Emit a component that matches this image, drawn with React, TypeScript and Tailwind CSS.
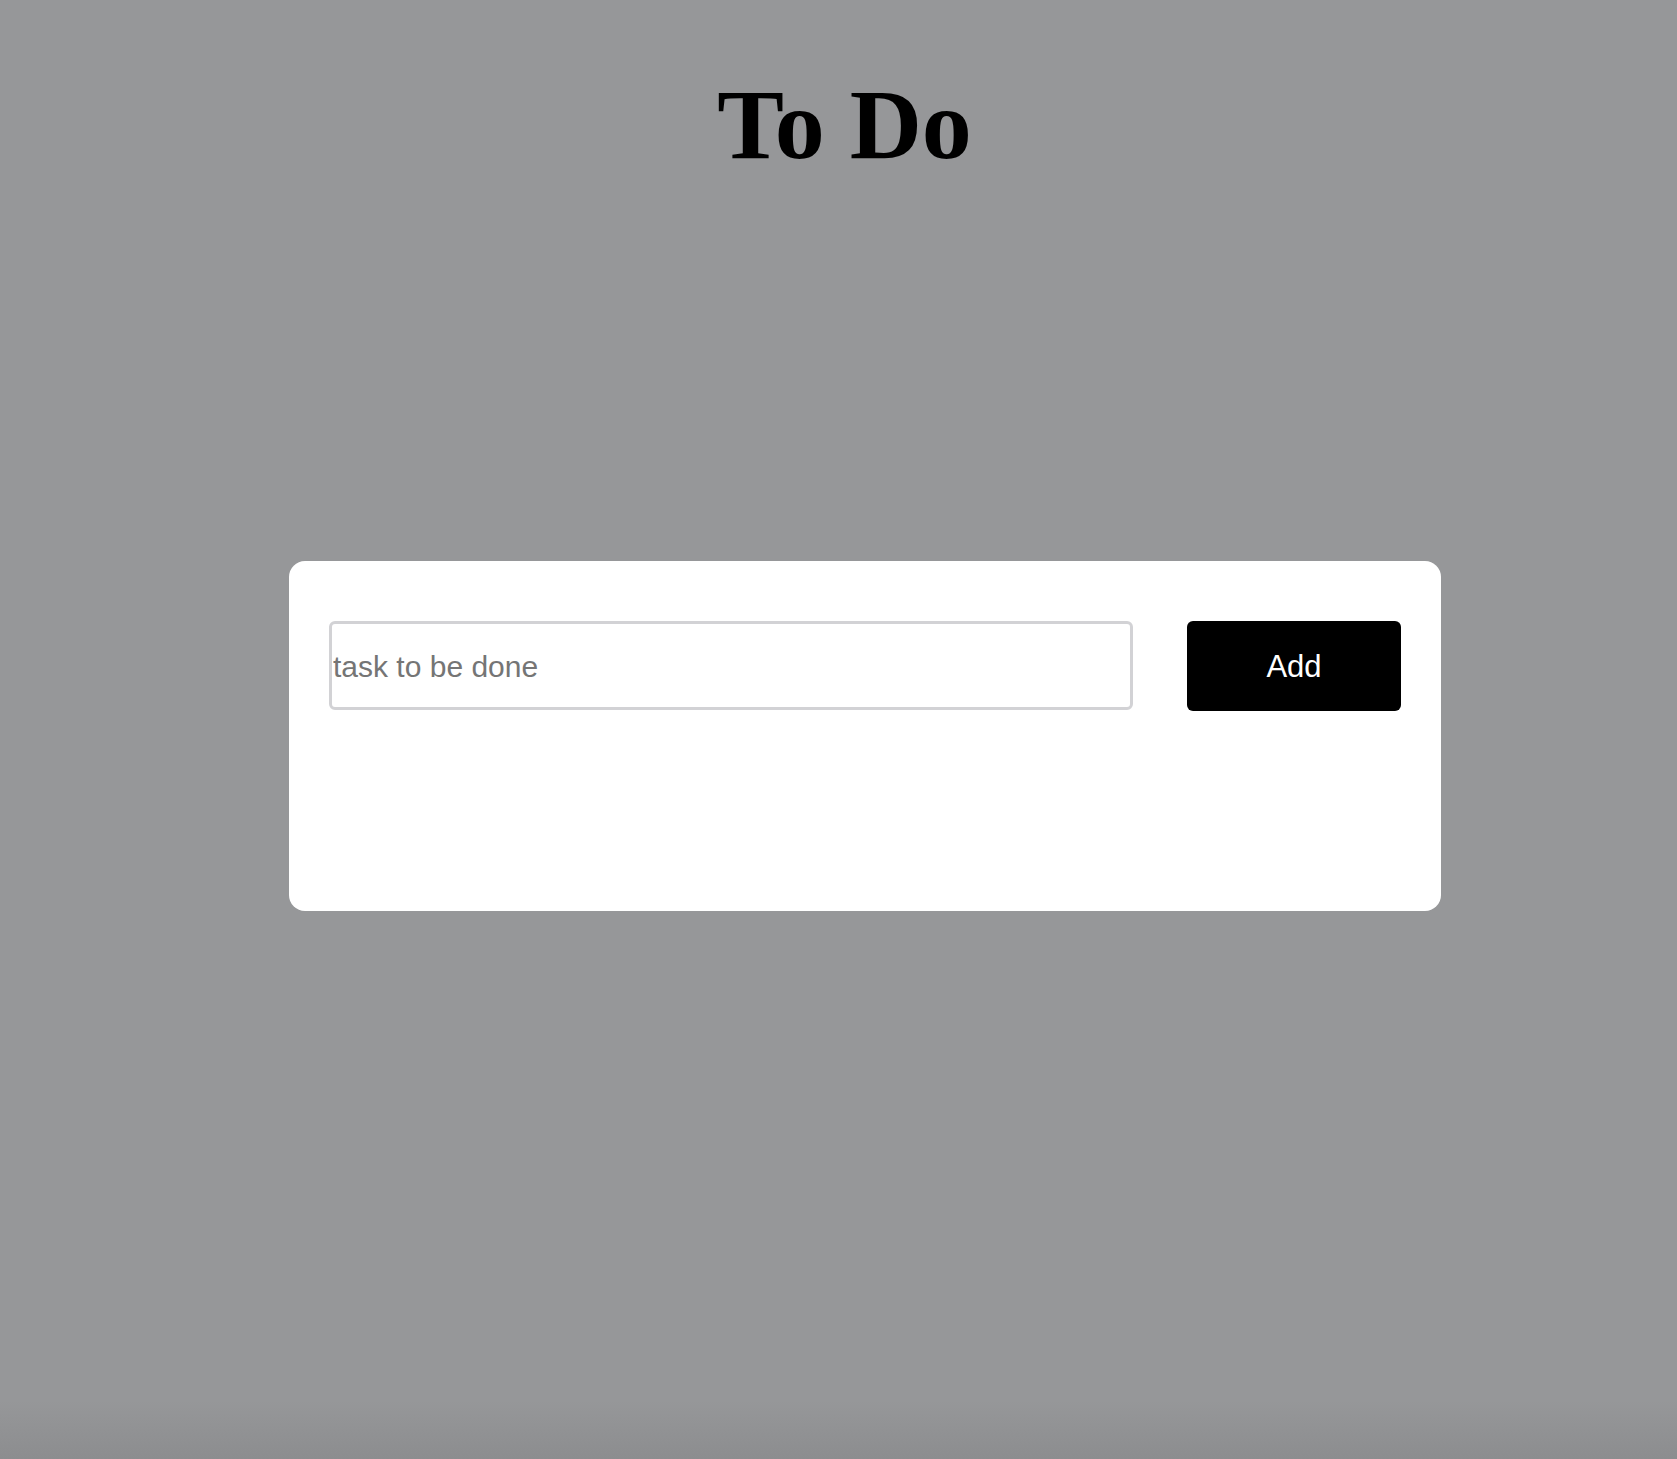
import React, { useState } from "react";

export default function App() {
  const [task, setTask] = useState("");
  const [tasks, setTasks] = useState<string[]>([]);

  const addTask = () => {
    if (!task.trim()) return;
    setTasks([...tasks, task.trim()]);
    setTask("");
  };

  return (
    <div className="min-h-screen bg-[linear-gradient(to_bottom,#969799_0%,#969799_96%,#8c8d8f_100%)] pt-[75px] font-['Liberation_Sans',Arial,sans-serif]">
      <h1 className="pl-[12px] text-center font-['Liberation_Serif','Times_New_Roman',serif] text-[100px] font-bold leading-none tracking-normal text-black">
        To Do
      </h1>
      <div className="mt-[386px] flex justify-center pl-[53px]">
        <div className="h-[350px] w-[1152px] rounded-2xl bg-white px-10 pt-[60px]">
          <div className="flex gap-[54px]">
            <input
              value={task}
              onChange={(e) => setTask(e.target.value)}
              placeholder="task to be done"
              className="h-[89px] flex-1 rounded-md border-[3px] border-[#d2d2d5] bg-white px-px pt-[2px] text-[30px] text-black outline-none placeholder:text-[#757575]"
            />
            <button
              onClick={addTask}
              className="h-[90px] w-[214px] rounded-md bg-black pt-[3px] text-[31px] text-white"
            >
              Add
            </button>
          </div>
          <ul className="mt-4 flex flex-col gap-2">
            {tasks.map((t, i) => (
              <li key={i} className="text-2xl text-black">
                {t}
              </li>
            ))}
          </ul>
        </div>
      </div>
    </div>
  );
}
